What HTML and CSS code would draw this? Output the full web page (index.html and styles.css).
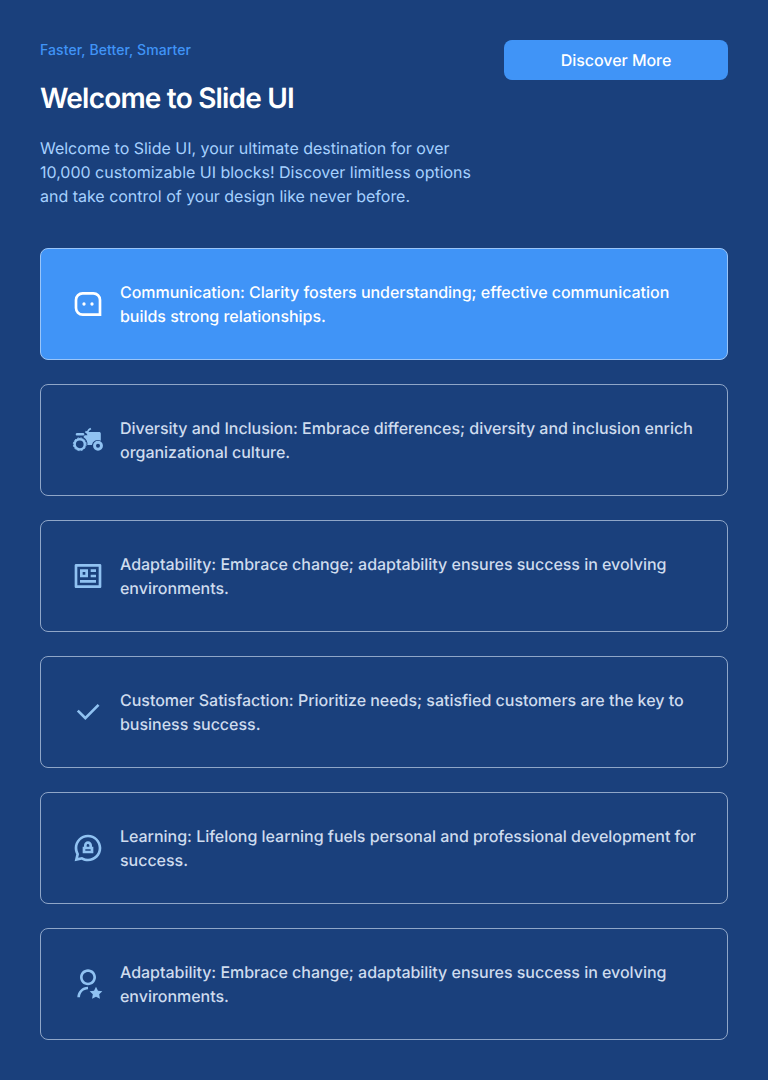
FILE: index.html
```html
<!DOCTYPE html>
<html lang="en">
<head>
<meta charset="utf-8">
<title>Slide UI</title>
<link rel="stylesheet" href="styles.css">
</head>
<body>
<main class="page">
  <header class="header">
    <div class="intro">
      <p class="eyebrow">Faster, Better, Smarter</p>
      <h1 class="title">Welcome to Slide UI</h1>
      <p class="lead">Welcome to Slide UI, your ultimate destination for over 10,000 customizable UI blocks! Discover limitless options and take control of your design like never before.</p>
    </div>
    <button class="button" type="button">Discover More</button>
  </header>
  <section class="cards">
    <article class="card card-active">
      <svg class="icon" viewBox="0 0 24 24"><path fill="none" stroke="currentColor" stroke-width="2" d="M21 20H8a5 5 0 0 1-5-5V9a5 5 0 0 1 5-5h8a5 5 0 0 1 5 5z"/><circle cx="9" cy="12" r="1.25"/><circle cx="15" cy="12" r="1.25"/></svg>
      <p class="text">Communication: Clarity fosters understanding; effective communication builds strong relationships.</p>
    </article>
    <article class="card">
      <svg class="icon" viewBox="0 0 24 24"><circle cx="5.8" cy="15.2" r="3.8" fill="none" stroke="currentColor" stroke-width="1.8"/><circle cx="5.8" cy="15.2" r="4.8" fill="none" stroke="currentColor" stroke-width=".7" stroke-dasharray="1.5 1.01"/><circle cx="19.5" cy="16.3" r="2.6" fill="none" stroke="currentColor" stroke-width="2.2"/><path d="M3.6 6.7h4.9c1.1 0 1.1 1.9 0 1.9H3.6c-1.1 0-1.1-1.9 0-1.9zM13.8 2.9l.7 1.1-1.4.8-1 1.6.8 1.4-1.2.6-1.1-1.7-.9-.4.6-1.2.9.3 1.1-1.7zM11.5 8.4V6.9c0-.6.4-.9.9-.9h8c.7 0 1.2.5 1.2 1.2v5.3a4.6 4.6 0 0 0-6.7 3.2h-3.4A6 6 0 0 0 8.7 10c0-.9.5-1.5 1.3-1.5z"/></svg>
      <p class="text">Diversity and Inclusion: Embrace differences; diversity and inclusion enrich organizational culture.</p>
    </article>
    <article class="card">
      <svg class="icon" viewBox="0 0 24 24"><path d="M2 3.9934C2 3.44476 2.45531 3 2.9918 3H21.0082C21.556 3 22 3.44495 22 3.9934V20.0066C22 20.5552 21.5447 21 21.0082 21H2.9918C2.44405 21 2 20.5551 2 20.0066V3.9934ZM4 5V19H20V5H4ZM6 7H12V13H6V7ZM8 9V11H10V9H8ZM14 9V7H18V9H14ZM14 13V11H18V13H14ZM6 15V17L18 17V15L6 15Z"/></svg>
      <p class="text">Adaptability: Embrace change; adaptability ensures success in evolving environments.</p>
    </article>
    <article class="card">
      <svg class="icon" viewBox="0 0 24 24"><path d="M9.9997 15.1709L19.1921 5.97852L20.6063 7.39273L9.9997 17.9993L3.63574 11.6354L5.04996 10.2212L9.9997 15.1709Z"/></svg>
      <p class="text">Customer Satisfaction: Prioritize needs; satisfied customers are the key to business success.</p>
    </article>
    <article class="card">
      <svg class="icon" viewBox="0 0 24 24"><path d="M12 2C17.5228 2 22 6.47715 22 12C22 17.5228 17.5228 22 12 22C10.298 22 8.69525 21.5748 7.29229 20.8248L2 22L3.17629 16.7097C2.42562 15.3063 2 13.7028 2 12C2 6.47715 6.47715 2 12 2ZM12 4C7.58172 4 4 7.58172 4 12C4 13.3347 4.32563 14.6181 4.93987 15.7664L5.28952 16.4201L4.63445 19.3663L7.58189 18.7118L8.23518 19.061C9.38315 19.6747 10.6659 20 12 20C16.4183 20 20 16.4183 20 12C20 7.58172 16.4183 4 12 4ZM12 7C13.6569 7 15 8.34315 15 10V11H16V16H8V11H9V10C9 8.34315 10.3431 7 12 7ZM14 13H10V14H14V13ZM12 9C11.4872 9 11.0645 9.38604 11.0067 9.88338L11 10V11H13V10C13 9.48716 12.614 9.06449 12.1166 9.00673L12 9Z"/></svg>
      <p class="text">Learning: Lifelong learning fuels personal and professional development for success.</p>
    </article>
    <article class="card">
      <svg class="icon" viewBox="0 0 24 24"><path d="M12 14V16C8.68629 16 6 18.6863 6 22H4C4 17.5817 7.58172 14 12 14ZM18 21.5L15.0611 23.0451L15.6224 19.7725L13.2447 17.4549L16.5305 16.9775L18 14L19.4695 16.9775L22.7553 17.4549L20.3776 19.7725L20.9389 23.0451L18 21.5ZM12 13C8.685 13 6 10.315 6 7C6 3.685 8.685 1 12 1C15.315 1 18 3.685 18 7C18 10.315 15.315 13 12 13ZM12 11C14.21 11 16 9.21 16 7C16 4.79 14.21 3 12 3C9.79 3 8 4.79 8 7C8 9.21 9.79 11 12 11Z"/></svg>
      <p class="text">Adaptability: Embrace change; adaptability ensures success in evolving environments.</p>
    </article>
  </section>
</main>
</body>
</html>
```
FILE: styles.css
```css
* { box-sizing: border-box; margin: 0; }
body {
  background: #1a407c;
  font-family: Inter, "Liberation Sans", sans-serif;
  font-size: 16px;
  line-height: 24px;
  text-rendering: geometricPrecision;
}
.page { display: flex; flex-direction: column; gap: 40px; min-height: 1080px; padding: 40px; }
.header { display: flex; justify-content: space-between; align-items: flex-start; gap: 24px; }
.intro { width: 440px; }
.eyebrow { color: #4094f7; font-size: 14px; font-weight: 500; line-height: 20px; letter-spacing: 0.09px; text-rendering: auto; }
.title { margin-top: 20px; color: #fff; font-size: 28px; font-weight: 600; line-height: 36px; letter-spacing: -0.8px; }
.lead { margin-top: 20px; color: #a6d1ff; letter-spacing: -0.015px; }
.button { width: 224px; height: 40px; border: 0; border-radius: 8px; background: #4094f7; color: #fff; font: 500 16px/24px Inter, "Liberation Sans", sans-serif; letter-spacing: -0.04px; text-rendering: geometricPrecision; }
.cards { display: flex; flex-direction: column; gap: 24px; }
.card { display: flex; align-items: center; gap: 16px; height: 112px; padding: 0 24px 0 31px; border: 1px solid #8fa6c8; border-radius: 8px; color: #cfdcee; }
.card-active { background: #4094f7; border-color: #9ac5f8; color: #fff; }
.icon { flex: none; width: 32px; height: 32px; fill: #90c2f2; color: #90c2f2; }
.card-active .icon { fill: #fff; color: #fff; }
.text { font-weight: 500; letter-spacing: -0.025px; }
```
